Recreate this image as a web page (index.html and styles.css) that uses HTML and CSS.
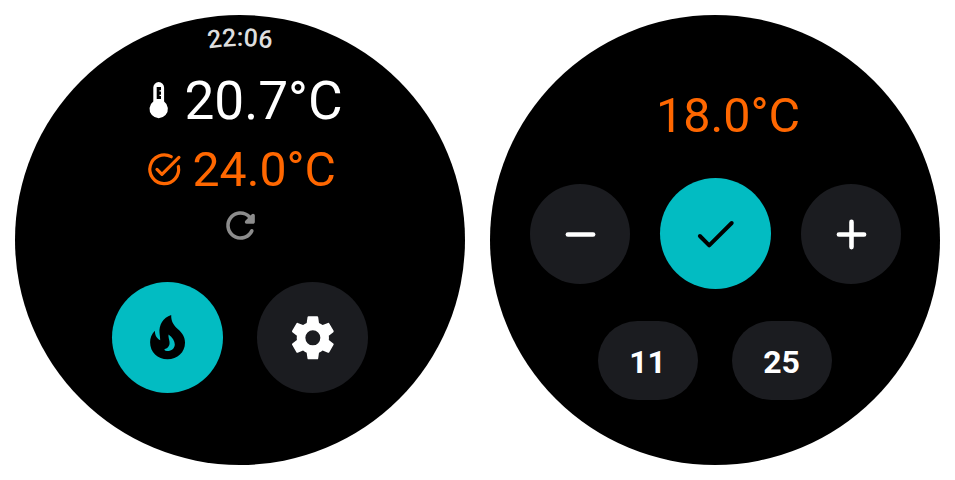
FILE: index.html
```
<!DOCTYPE html>
<html lang="en">
<head>
<meta charset="utf-8">
<title>Thermostat</title>
<link rel="stylesheet" href="styles.css">
</head>
<body>
<main class="faces">
  <section class="face">
    <svg class="clock" viewBox="0 0 450 60">
      <path id="rim" d="M30.500 225.500A194.500 194.500 0 0 1 419.500 225.500" fill="none"/>
      <text class="clock-text"><textPath href="#rim" startOffset="50%">22:06</textPath></text>
    </svg>
    <div class="reading current">
      <svg class="thermo" viewBox="0 0 30 46"><path fill="#fff" fill-rule="evenodd" d="M9.300 23.500V9.500a5.400 5.400 0 0 1 10.800 0v14a9.200 9.200 0 1 1-10.800 0zM12.700 9v12h4.300v-3h-1.500v-1.300H17v-3.200h-1.500v-1.300H17V9z"/></svg>
      <span>20.7°C</span>
    </div>
    <div class="reading target">
      <svg class="task" viewBox="0 0 24 24"><path fill="none" stroke="currentColor" stroke-width="2" stroke-linecap="round" stroke-linejoin="round" d="M16.400 4.200A9 9 0 1 0 20.850 10.300M7.500 12.100l3.100 3.100L21.200 4.600"/></svg>
      <span>24.0°C</span>
    </div>
    <svg class="refresh" viewBox="0 0 24 24"><path fill="#8c8c8c" d="M17.650 6.350c-1.630-1.630-3.940-2.570-6.480-2.310-3.670.370-6.690 3.350-7.100 7.020C3.520 15.910 7.270 20 12 20c3.190 0 5.930-1.870 7.210-4.560.320-.670-.160-1.440-.900-1.440-.370 0-.720.200-.880.530-1.130 2.430-3.840 3.970-6.800 3.310-2.220-.490-4.010-2.300-4.480-4.520C5.310 9.440 8.260 6 12 6c1.660 0 3.140.690 4.220 1.780l-1.510 1.510c-.630.630-.190 1.710.700 1.710H19c.550 0 1-.450 1-1V6.410c0-.890-1.080-1.340-1.710-.710l-.640.650z"/></svg>
    <div class="actions">
      <button class="round big primary" aria-label="Heat">
        <svg class="flame" viewBox="0 0.700 45 54"><path fill-rule="evenodd" d="M26.200 4.800C18 7.500 13.800 15 14.500 22.500c.2 2.500.6 4.500.7 7.500C11.500 28 10 25 9.800 20.500 6.500 24 5.100 28 5.100 32c0 10 7.500 17 17.400 17C32.500 49 40 42 40 32.500c0-6-3-10-7-13.500C28.500 15 26 11 26.200 4.800zM23.500 24.300c4 3 6.300 6.500 6.300 10 0 4-3.500 6.800-8 6.500-1.500-.1-2.500-.8-2.300-2 3.500-.8 5.500-3.300 5-7.300-.3-2.500-1.300-4.500-1-7.200z"/></svg>
      </button>
      <button class="round big" aria-label="Settings">
        <svg class="gear" viewBox="0 0 24 24"><path fill="#fff" fill-rule="evenodd" d="M19.140 12.940c.040-.300.060-.610.060-.940 0-.320-.020-.640-.070-.940l2.030-1.580c.180-.140.230-.410.120-.610l-1.920-3.320c-.120-.220-.370-.290-.590-.220l-2.390.960c-.500-.380-1.030-.700-1.620-.940L14.400 2.810c-.040-.240-.240-.410-.480-.410h-3.840c-.240 0-.430.170-.470.410L9.250 5.350C8.660 5.590 8.120 5.920 7.630 6.290L5.240 5.330c-.220-.080-.470 0-.590.220L2.740 8.870c-.120.210-.080.470.120.610l2.030 1.580C4.840 11.360 4.800 11.690 4.800 12s.020.640.070.940l-2.030 1.580c-.180.140-.230.410-.120.610l1.920 3.320c.120.220.370.290.590.220l2.390-.960c.500.380 1.030.700 1.620.940l.360 2.540c.050.240.240.410.480.410h3.840c.240 0 .440-.170.470-.410l.360-2.540c.590-.240 1.130-.560 1.620-.940l2.390.960c.220.080.470 0 .590-.220l1.920-3.320c.120-.220.070-.470-.120-.610zM12 15.350a3.350 3.350 0 1 1 0-6.700 3.350 3.350 0 0 1 0 6.700z"/></svg>
      </button>
    </div>
  </section>

  <section class="face">
    <div class="setpoint">18.0°C</div>
    <div class="controls">
      <button class="round" aria-label="Decrease"><svg class="glyph" viewBox="0 0 50 50"><path class="light" d="M12.900 25.500h25.200"/></svg></button>
      <button class="round big primary" aria-label="Confirm"><svg class="glyph" viewBox="0 0 50 50"><path class="dark" d="M9.900 27l9.300 9.300L41.700 14"/></svg></button>
      <button class="round" aria-label="Increase"><svg class="glyph" viewBox="0 0 50 50"><path class="light" d="M12.900 25.500h25.200M25.500 12.900v25.200"/></svg></button>
    </div>
    <div class="presets">
      <button class="pill">11</button>
      <button class="pill">25</button>
    </div>
  </section>
</main>
</body>
</html>
```
FILE: styles.css
```
* { box-sizing: border-box; }
body { margin: 0; background: #fff; font-family: Roboto, "Liberation Sans", sans-serif; }
.faces { display: flex; gap: 25px; padding: 15px; }
.face {
  width: 450px; height: 450px; flex: none; border-radius: 50%;
  background: #000; overflow: hidden;
  display: flex; flex-direction: column; align-items: center;
}
.clock { width: 450px; height: 60px; margin-bottom: -6px; flex: none; overflow: visible; }
.clock-text { font-size: 25px; font-weight: 500; fill: #dedede; text-anchor: middle; }
.reading { display: flex; align-items: center; white-space: nowrap; }
.current { color: #fff; font-size: 53.2px; line-height: 64px; height: 64px; margin-left: 7px; }
.target { color: #ff6700; font-size: 48.2px; line-height: 58px; height: 58px; margin-top: 7px; gap: 9px; margin-left: 1px; }
.thermo { width: 30px; height: 46px; margin-right: 10px; }
.task { width: 38.400px; height: 38.400px; }
.target span { padding-top: 1px; }
.refresh { width: 43px; height: 43px; margin-top: 6px; flex: none; }
.actions { display: flex; gap: 34px; margin-top: 35px; }
.round {
  display: flex; align-items: center; justify-content: center;
  width: 100px; height: 100px; padding: 0; border: 0; border-radius: 50%;
  background: #1b1c20; flex: none;
}
.big { width: 111px; height: 111px; }
.primary { background: #02bcc2; }
.flame { width: 45px; height: 54px; }
.gear { width: 53.700px; height: 53.700px; }
.setpoint { color: #ff6700; font-size: 48.5px; line-height: 58px; margin: 72px 0 0 26px; }
.controls { display: flex; align-items: center; gap: 30px; margin-top: 33px; }
.glyph { width: 50px; height: 50px; }
.light, .dark { fill: none; stroke-width: 4.600; stroke-linecap: round; }
.light { stroke: #fff; }
.dark { stroke: #000; stroke-width: 4; stroke-linejoin: round; }
.presets { display: flex; gap: 34px; margin-top: 32px; }
.pill {
  width: 100px; height: 79px; padding: 3px 1px 0 0; border: 0; border-radius: 40px;
  background: #1b1c20; color: #fff; font: 700 32px Roboto, "Liberation Sans", sans-serif;
}
```
